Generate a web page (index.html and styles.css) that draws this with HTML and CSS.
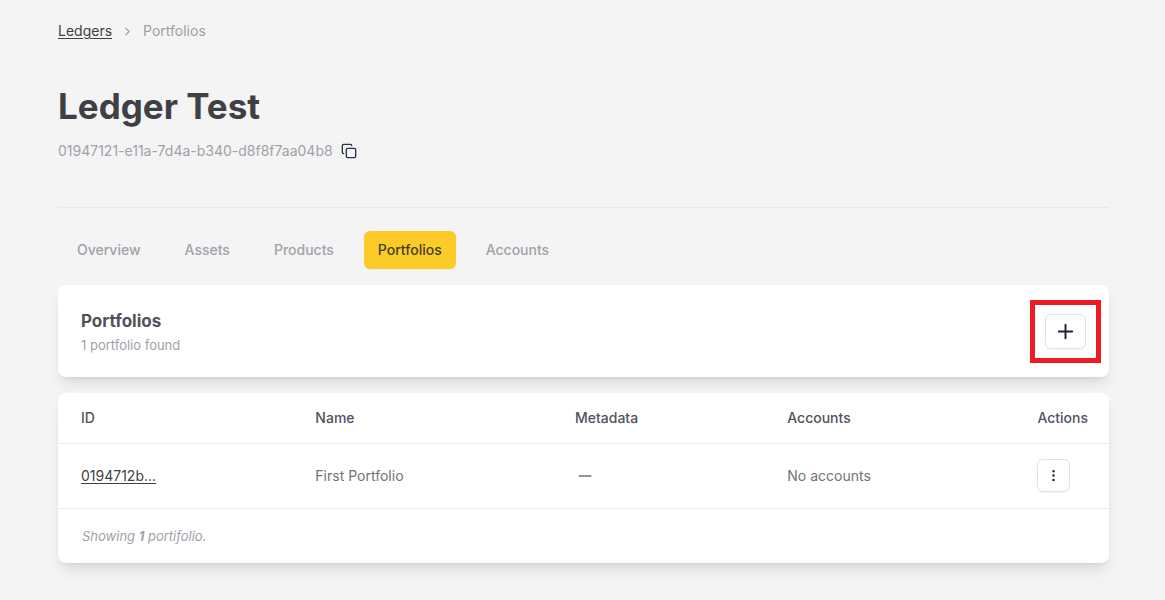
FILE: index.html
```html
<!DOCTYPE html>
<html lang="en">
<head>
<meta charset="utf-8">
<title>Ledger Test – Portfolios</title>
<link rel="stylesheet" href="styles.css">
</head>
<body>
<main class="page">
  <nav class="breadcrumb" aria-label="Breadcrumb">
    <a class="link" href="#">Ledgers</a>
    <svg class="chevron" viewBox="0 0 24 24" aria-hidden="true"><path d="m9 18 6-6-6-6"/></svg>
    <span>Portfolios</span>
  </nav>

  <header class="heading">
    <h1 class="title">Ledger Test</h1>
    <div class="identifier">
      <span>01947121-e11a-7d4a-b340-d8f8f7aa04b8</span>
      <button class="copy" type="button" aria-label="Copy ID">
        <svg class="copy-icon" viewBox="0 0 24 24" aria-hidden="true"><rect x="8" y="8" width="14" height="14" rx="2"/><path d="M4 16c-1.1 0-2-.9-2-2V4c0-1.100.9-2 2-2h10c1.100 0 2 .9 2 2"/></svg>
      </button>
    </div>
  </header>

  <div class="tabs" role="tablist">
    <button class="tab" type="button" role="tab">Overview</button>
    <button class="tab" type="button" role="tab">Assets</button>
    <button class="tab" type="button" role="tab">Products</button>
    <button class="tab tab-active" type="button" role="tab" aria-selected="true">Portfolios</button>
    <button class="tab" type="button" role="tab">Accounts</button>
  </div>

  <section class="card summary">
    <div class="summary-text">
      <h2 class="summary-title">Portfolios</h2>
      <p class="summary-count">1 portfolio found</p>
    </div>
    <div class="highlight">
      <button class="button add" type="button" aria-label="New portfolio">
        <svg class="plus" viewBox="0 0 24 24" aria-hidden="true"><path d="M5 12h14M12 5v14"/></svg>
      </button>
    </div>
  </section>

  <section class="card">
    <table class="table">
      <colgroup><col class="col-id"><col class="col-name"><col class="col-meta"><col class="col-accounts"><col></colgroup>
      <thead>
        <tr><th>ID</th><th>Name</th><th>Metadata</th><th>Accounts</th><th>Actions</th></tr>
      </thead>
      <tbody>
        <tr>
          <td><a class="link" href="#">0194712b...</a></td>
          <td>First Portfolio</td>
          <td><svg class="dash" viewBox="0 0 24 24" aria-label="None"><path d="M5 12h14"/></svg></td>
          <td>No accounts</td>
          <td>
            <button class="button more" type="button" aria-label="Row actions">
              <svg class="dots" viewBox="0 0 24 24" aria-hidden="true"><circle cx="12" cy="12" r="1"/><circle cx="12" cy="5" r="1"/><circle cx="12" cy="19" r="1"/></svg>
            </button>
          </td>
        </tr>
      </tbody>
    </table>
    <p class="footer">Showing <strong>1</strong> portifolio.</p>
  </section>
</main>
</body>
</html>
```
FILE: styles.css
```css
* { box-sizing: border-box; }

body {
  margin: 0;
  background: #f4f4f4;
  color: #52525b;
  font: 400 14px/20px Inter, sans-serif;
}

h1, h2, p { margin: 0; }

button {
  border: 0;
  padding: 0;
  background: none;
  color: inherit;
  font: inherit;
}

svg {
  display: block;
  fill: none;
  stroke: currentColor;
  stroke-width: 2;
  stroke-linecap: round;
  stroke-linejoin: round;
}

.page { padding: 21px 56px 36px 58px; }

.link {
  color: #3f3f46;
  text-decoration: underline;
  text-underline-offset: 2px;
}

.breadcrumb {
  display: flex;
  align-items: center;
  gap: 9px;
  color: #9f9fa9;
}
.chevron { width: 13px; height: 13px; }

.heading {
  padding: 43px 0 46px;
  border-bottom: 1px solid #e7eaed;
}
.title {
  color: #3f3f46;
  font-size: 35px;
  line-height: 44px;
  font-weight: 700;
}
.identifier {
  display: flex;
  align-items: center;
  gap: 8px;
  margin-top: 13px;
  color: #a1a1aa;
}
.copy { color: #27304a; }
.copy-icon { width: 16px; height: 16px; }

.tabs {
  display: flex;
  gap: 16px;
  margin: 23px 0 16px 5px;
}
.tab {
  padding: 9px 14px;
  border-radius: 6px;
  color: #a1a1aa;
  font-weight: 500;
}
.tab-active {
  background: #fdcb28;
  color: #3f3f23;
  box-shadow: 0 1px 2px #0000000d;
}

.card {
  border-radius: 8px;
  background: #fff;
  box-shadow: 0 9px 14px -3px #0000001a, 0 4px 6px -4px #0000001a;
}

.summary {
  display: flex;
  align-items: center;
  justify-content: space-between;
  margin-bottom: 16px;
  padding: 15px 8px 14px 23px;
}
.summary-text { padding-top: 2px; }
.summary-title {
  font-size: 17px;
  line-height: 24px;
  font-weight: 700;
}
.summary-count {
  color: #a1a1aa;
  font-size: 13px;
  line-height: 24px;
}

.highlight {
  padding: 9px 10px;
  border: 5px solid #ed1c24;
}
.button {
  display: grid;
  place-items: center;
  border: 1px solid #e2e2e4;
  border-radius: 6px;
  background: #fff;
  color: #1b2238;
  box-shadow: 0 1px 2px #0000000d;
}
.add { width: 41px; height: 35px; }
.plus { width: 23px; height: 23px; }
.more { width: 33px; height: 33px; }
.dots { width: 15px; height: 15px; }

.table {
  width: 100%;
  border-collapse: collapse;
  table-layout: fixed;
}
.col-id { width: 22.3%; }
.col-name { width: 24.7%; }
.col-meta { width: 20.2%; }
.col-accounts { width: 23.8%; }
.table th, .table td {
  height: 65px;
  padding: 0 0 0 23px;
  border-bottom: 1px solid #e8eef4;
  text-align: left;
}
.table th {
  height: 50px;
  font-weight: 500;
}
.table td { color: #71717a; }
.dash { width: 20px; height: 20px; }

.footer {
  padding: 17px 24px;
  color: #a1a1aa;
  font-size: 13px;
  font-style: italic;
}
```
